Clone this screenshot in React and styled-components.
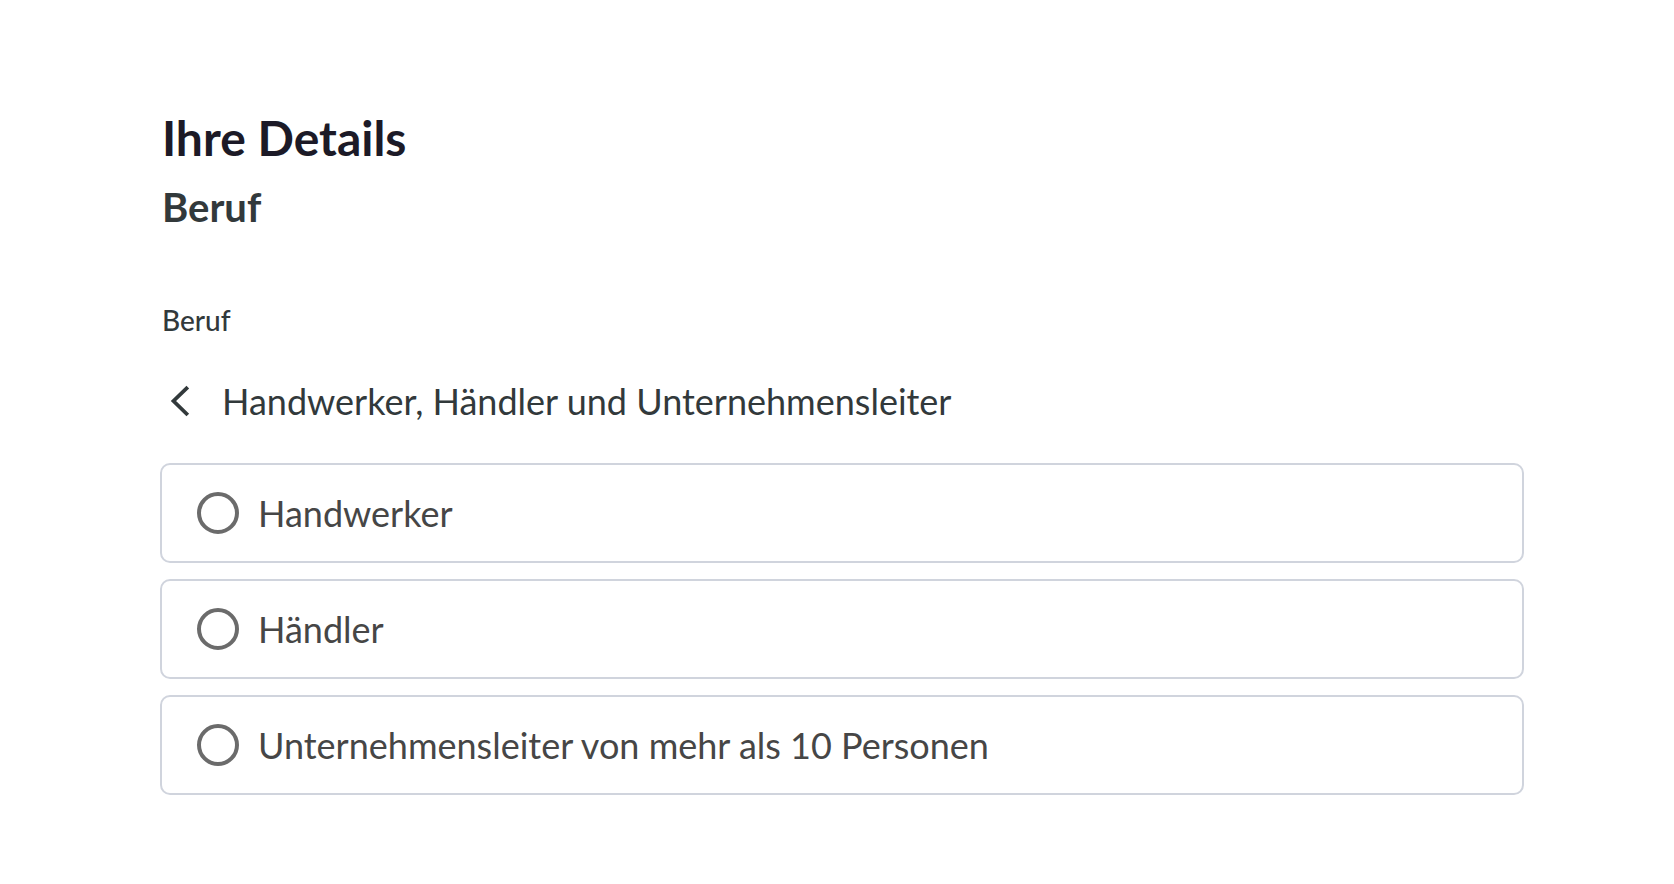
import React, { useState } from 'react';
import styled, { createGlobalStyle } from 'styled-components';

const GlobalStyle = createGlobalStyle`
  * {
    box-sizing: border-box;
  }

  body {
    margin: 0;
    background-color: #fff;
    color: #32393b;
    font-family: Lato, 'Liberation Sans', sans-serif;
  }
`;

const Page = styled.main`
  padding: 105px 150px 88px 160px;
`;

const Title = styled.h1`
  margin: 0;
  padding-left: 2px;
  font-size: 48px;
  line-height: 66px;
  font-weight: 700;
  color: #1c1a27;
`;

const Subtitle = styled.h2`
  margin: 8px 0 0;
  padding-left: 2px;
  font-size: 40px;
  line-height: 56px;
  font-weight: 700;
`;

const Group = styled.fieldset`
  min-width: 0;
  margin: 64px 0 0;
  padding: 0;
  border: 0;
`;

const Legend = styled.legend`
  padding: 0 0 0 2px;
  font-family: 'Lato Medium', Lato, 'Liberation Sans', sans-serif;
  font-size: 28px;
  line-height: 42px;
  font-weight: 500;
`;

const BackButton = styled.button`
  display: flex;
  align-items: center;
  gap: 22px;
  margin: 36px 0 0;
  padding: 0;
  border: 0;
  background: none;
  color: inherit;
  font-family: inherit;
  font-size: 36px;
  line-height: 48px;
  text-align: left;
  cursor: pointer;
`;

const OptionList = styled.div`
  display: flex;
  flex-direction: column;
  gap: 16px;
  margin-top: 38px;
`;

const Option = styled.label`
  display: flex;
  align-items: center;
  gap: 19px;
  min-height: 100px;
  padding: 0 35px;
  border: 2px solid #d0d4dd;
  border-radius: 10px;
  color: #464646;
  font-size: 36px;
  line-height: 48px;
  cursor: pointer;
`;

const Radio = styled.input`
  appearance: none;
  flex: none;
  width: 42px;
  height: 42px;
  margin: 0;
  border: 4px solid #6b6b6b;
  border-radius: 50%;
  background-color: #fff;
  cursor: pointer;

  &:checked {
    background-color: #6b6b6b;
    box-shadow: inset 0 0 0 6px #fff;
  }
`;

const options = [
  { value: 'handwerker', label: 'Handwerker' },
  { value: 'haendler', label: 'Händler' },
  { value: 'unternehmensleiter', label: 'Unternehmensleiter von mehr als 10 Personen' },
];

const App = () => {
  const [selected, setSelected] = useState('');

  return (
    <>
      <GlobalStyle />
      <Page>
        <Title>Ihre Details</Title>
        <Subtitle>Beruf</Subtitle>
        <Group>
          <Legend>Beruf</Legend>
          <BackButton type="button">
            <svg width="40" height="40" viewBox="0 0 40 40" fill="none" aria-hidden="true">
              <path d="M27.8 6.2L13.5 20L27.8 34" stroke="currentColor" strokeWidth="3.8" />
            </svg>
            Handwerker, Händler und Unternehmensleiter
          </BackButton>
          <OptionList>
            {options.map(option => (
              <Option key={option.value}>
                <Radio
                  type="radio"
                  name="beruf"
                  value={option.value}
                  checked={selected === option.value}
                  onChange={() => setSelected(option.value)}
                />
                {option.label}
              </Option>
            ))}
          </OptionList>
        </Group>
      </Page>
    </>
  );
};

export default App;
